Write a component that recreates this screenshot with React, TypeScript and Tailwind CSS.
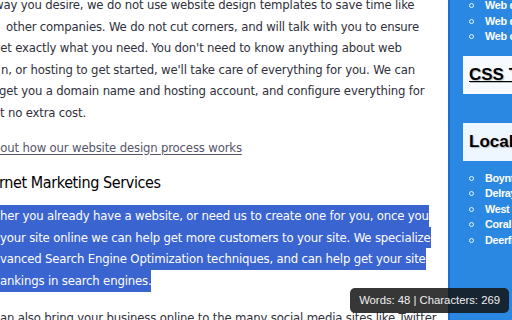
import React from 'react';

const bodyFont = "font-['DejaVu_Sans_Condensed','DejaVu_Sans',sans-serif]";

function Line({ ml, children }: { ml: string; children: React.ReactNode }) {
  return <div className={`whitespace-nowrap ${ml}`}>{children}</div>;
}

function Sel({ children }: { children: React.ReactNode }) {
  return (
    <div className="whitespace-nowrap">
      <span className="inline-block bg-[#3a64cf] text-white">{children}</span>
    </div>
  );
}

function SideItem({ label }: { label: string }) {
  return (
    <li className="flex items-center gap-[11px] pl-[19px]">
      <span className="w-[5px] h-[5px] rounded-full border border-white/90 shrink-0" />
      <span className="whitespace-nowrap">{label}</span>
    </li>
  );
}

export default function App() {
  return (
    <div className="relative w-[512px] h-[320px] overflow-hidden bg-white flex">
      {/* Main article column */}
      <div className={`w-[448px] shrink-0 overflow-hidden text-[13px] leading-[21.6px] tracking-[-0.17px] text-[#30303c] ${bodyFont}`}>
        <div className="mt-[-6px]">
          <Line ml="ml-[-6px]">way you desire, we do not use website design templates to save time like</Line>
          <Line ml="ml-[6px]">other companies. We do not cut corners, and will talk with you to ensure</Line>
          <Line ml="ml-[-7px]">get exactly what you need. You don't need to know anything about web</Line>
          <Line ml="ml-[1px]">n, or hosting to get started, we'll take care of everything for you. We can</Line>
          <Line ml="ml-[-1px]">get you a domain name and hosting account, and configure everything for</Line>
          <Line ml="ml-[-7px]">at no extra cost.</Line>
        </div>

        <div className="mt-[13px] ml-[-14px] whitespace-nowrap">
          <a href="#" className="text-[#55556a] underline underline-offset-2">
            about how our website design process works
          </a>
        </div>

        <h2 className="mt-[13px] ml-[-1px] h-[24px] leading-[24px] text-[16px] tracking-[-0.4px] text-black whitespace-nowrap">
          rnet Marketing Services
        </h2>

        <div className="mt-[10px]">
          <Sel>her you already have a website, or need us to create one for you, once you</Sel>
          <Sel>your site online we can help get more customers to your site. We specialize</Sel>
          <Sel>vanced Search Engine Optimization techniques, and can help get your site </Sel>
          <Sel>ankings in search engines.</Sel>
        </div>

        <div className="mt-[15px] whitespace-nowrap">
          an also bring your business online to the many social media sites like Twitter
        </div>
      </div>

      {/* Sidebar */}
      <aside className="flex-1 bg-[#2b88e2] border-l-2 border-[#1b6fd4] font-['Liberation_Sans',Arial,sans-serif] text-white font-bold text-[10.8px] tracking-[-0.3px] leading-[15.5px] overflow-hidden">
        <ul className="mt-[-2px]">
          <SideItem label="Web design" />
          <SideItem label="Web development" />
          <SideItem label="Web copywriting" />
        </ul>

        <div className="mt-[11px] ml-[13px] h-[38px] bg-[#f7fbff] flex items-center pl-[6px] tracking-normal">
          <span className="text-[17px] text-black underline whitespace-nowrap [text-shadow:1px_1px_1px_rgba(0,0,0,0.25)]">
            CSS Tutorials
          </span>
        </div>

        <div className="mt-[29px] ml-[13px] h-[38px] bg-[#eef6ff] flex items-center pl-[6px] tracking-normal">
          <span className="text-[17px] text-black whitespace-nowrap [text-shadow:1px_1px_1px_rgba(0,0,0,0.25)]">
            Local Areas
          </span>
        </div>

        <ul className="mt-[10px]">
          <SideItem label="Boynton Beach" />
          <SideItem label="Delray Beach" />
          <SideItem label="West Palm Beach" />
          <SideItem label="Coral Springs" />
          <SideItem label="Deerfield Beach" />
        </ul>
      </aside>

      {/* Word count tooltip */}
      <div className="absolute right-[3px] bottom-[7px] h-[25px] px-[9px] flex items-center rounded-[5px] bg-[#141414]/85 text-[#f0f0f0] text-[11.3px] font-['Liberation_Sans',Arial,sans-serif] whitespace-nowrap">
        Words: 48 | Characters: 269
      </div>
    </div>
  );
}
